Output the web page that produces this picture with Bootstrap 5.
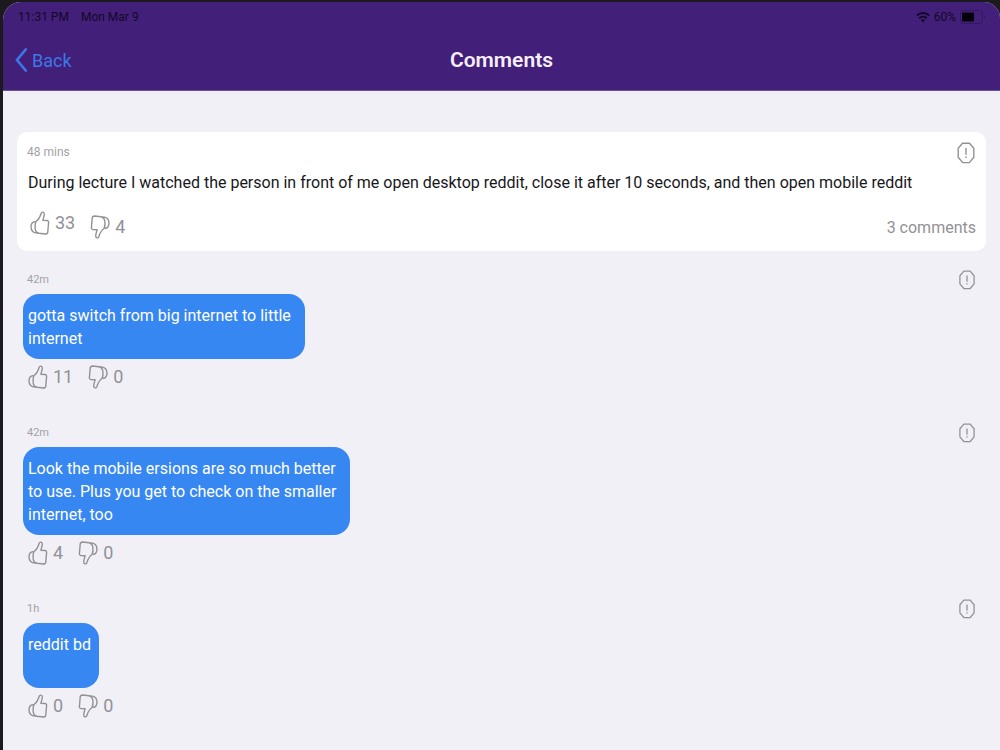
<!DOCTYPE html>
<html lang="en">
<head>
<meta charset="utf-8">
<meta name="viewport" content="width=device-width, initial-scale=1">
<title>Comments</title>
<link href="https://cdn.jsdelivr.net/npm/bootstrap@5.3.0/dist/css/bootstrap.min.css" rel="stylesheet">
<style>
body { font-family: Roboto, "Liberation Sans", sans-serif; background: #1c191f; color: #18171b; font-size: 16px; line-height: 23px; }
.screen { margin: 2px 0 0 3px; min-height: calc(100vh - 2px); background: #f1f0f6; border-radius: 18px 16px 0 0; overflow: hidden; }
.topbar { background: #421f78; height: 89px; border-bottom: 1px solid #6d4f96; }
.status { font-size: 12px; line-height: 16px; padding: 7px 14px 0 15px; color: #160729; }
.titlebar { display: grid; grid-template-columns: 1fr auto 1fr; align-items: center; height: 48px; margin-top: 11px; padding: 0 12px; }
.titlebar h1 { font-size: 21px; line-height: 28px; font-weight: 600; color: #f6eefb; margin: 0; }
.back { color: #3b78e8; font-size: 18px; gap: 4px; }
.content { padding: 41px 14px 0; }
.post { border-radius: 10px; padding: 10px 10px 12px; min-height: 119px; }
.age { font-size: 12px; line-height: 20px; color: #a3a2a7; }
.post-text { padding-left: 1px; margin: 7px 0 0; }
.reply { padding: 19px 10px 0 6px; }
.reply .age { font-size: 11px; padding-left: 4px; }
.bubble { background: #3787f3; color: #fff; border-radius: 16px; min-height: 65px; margin-top: 4px; padding: 10px 14px 9px 5px; }
.solo { padding-right: 8px; }
.plain { background: none; border: 0; padding: 0; color: #929196; }
.vote { display: flex; align-items: center; font-size: 18px; line-height: 24px; gap: 5px; }
.votes { display: flex; margin: 6px 0 0 5px; gap: 15px; }
.post .votes { margin-left: 3px; margin-top: 0; }
.post .down { margin-top: 4px; }
.space { margin-bottom: 15px; }
svg { display: block; flex: none; }
</style>
</head>
<body>
<svg width="0" height="0" class="position-absolute" aria-hidden="true">
  <symbol id="thumb" viewBox="0 0 20 24"><g fill="none" stroke="#929196" stroke-width="1.4" stroke-linejoin="round" stroke-linecap="round"><path d="M6 10.5C9.5 8 10.4 4.8 11.2 2.2C11.8.6 14.4.7 14.3 3.2C14.2 5.5 13.2 7.5 12.9 9.3L17.2 9.5C18.7 9.7 18.8 11.3 18.5 12.5L17.8 20.8C17.6 22.4 16.8 23 15.5 23L9 22.3C6.8 21.8 5.5 20.3 5.1 17.5C4.8 14.6 4.8 12.5 6 10.5Z"/><path d="M5.2 10.7C2.5 10.5 1 12.7 1 16C1.1 19.8 3 22.2 7.8 22"/></g></symbol>
  <symbol id="report" viewBox="0 0 18 22"><g fill="none" stroke="#929196" stroke-width="1.4" stroke-linejoin="round"><path d="M5.5 1.2H12.5L16.8 6.3V15.2L12.3 20.6H5.7L1.2 15.2V6.3Z"/><path d="M9 6V12.8M9 14.5V16"/></g></symbol>
</svg>
<div class="screen">
  <header class="topbar">
    <div class="status d-flex justify-content-between">
      <div class="d-flex"><span>11:31 PM</span><span class="ms-2 ps-1">Mon Mar 9</span></div>
      <div class="d-flex align-items-center">
        <svg width="14" height="12" viewBox="0 0 14 12" fill="none" stroke="#160729" stroke-width="2"><path d="M.8 4.5C4.3 1.1 9.7 1.1 13.2 4.5M3.2 7.3C5.4 5.2 8.6 5.2 10.8 7.3"/><path d="M4.8 9Q7 7.4 9.2 9L7 11.5Z" fill="#160729" stroke="none"/></svg>
        <span class="mx-1">60%</span>
        <svg width="26" height="14" viewBox="0 0 26 14"><rect x=".5" y=".5" width="22" height="13" rx="3" fill="none" stroke="#351760"/><rect x="2" y="2.5" width="12" height="9" rx="1" fill="#05010b"/><path d="M24 5Q26 7 24 9Z" fill="#351760"/></svg>
      </div>
    </div>
    <div class="titlebar">
      <a href="#" class="back d-flex align-items-center text-decoration-none"><svg width="13" height="26" viewBox="0 0 13 26" fill="none" stroke="currentColor" stroke-width="2.6"><path d="M11.5 1.5L2 13L11.5 24.5"/></svg>Back</a>
      <h1>Comments</h1>
    </div>
  </header>
  <main class="content">
    <article class="post bg-white d-flex flex-column">
      <div class="d-flex justify-content-between"><span class="age">48 mins</span><button class="plain" aria-label="Report post"><svg width="20" height="22"><use href="#report"/></svg></button></div>
      <p class="post-text">During lecture I watched the person in front of me open desktop reddit, close it after 10 seconds, and then open mobile reddit</p>
      <div class="d-flex justify-content-between align-items-end mt-auto">
        <div class="votes"><button class="plain vote mb-1" aria-label="Like"><svg width="20" height="24"><use href="#thumb"/></svg>33</button><button class="plain vote down" aria-label="Dislike"><svg width="20" height="24" viewBox="0 0 20 24"><use href="#thumb" transform="rotate(180 10 12)"/></svg>4</button></div>
        <a href="#" class="plain text-decoration-none">3 comments</a>
      </div>
    </article>
    <article class="reply space">
      <div class="d-flex justify-content-between"><span class="age">42m</span><button class="plain" aria-label="Report comment"><svg width="18" height="20"><use href="#report"/></svg></button></div>
      <div class="d-flex"><div class="bubble">gotta switch from big internet to little<br>internet</div></div>
      <div class="votes"><button class="plain vote" aria-label="Like"><svg width="20" height="24"><use href="#thumb"/></svg>11</button><button class="plain vote" aria-label="Dislike"><svg width="20" height="24" viewBox="0 0 20 24"><use href="#thumb" transform="rotate(180 10 12)"/></svg>0</button></div>
    </article>
    <article class="reply space">
      <div class="d-flex justify-content-between"><span class="age">42m</span><button class="plain" aria-label="Report comment"><svg width="18" height="20"><use href="#report"/></svg></button></div>
      <div class="d-flex"><div class="bubble">Look the mobile ersions are so much better<br>to use. Plus you get to check on the smaller<br>internet, too</div></div>
      <div class="votes"><button class="plain vote" aria-label="Like"><svg width="20" height="24"><use href="#thumb"/></svg>4</button><button class="plain vote" aria-label="Dislike"><svg width="20" height="24" viewBox="0 0 20 24"><use href="#thumb" transform="rotate(180 10 12)"/></svg>0</button></div>
    </article>
    <article class="reply">
      <div class="d-flex justify-content-between"><span class="age">1h</span><button class="plain" aria-label="Report comment"><svg width="18" height="20"><use href="#report"/></svg></button></div>
      <div class="d-flex"><div class="bubble solo">reddit bd</div></div>
      <div class="votes"><button class="plain vote" aria-label="Like"><svg width="20" height="24"><use href="#thumb"/></svg>0</button><button class="plain vote" aria-label="Dislike"><svg width="20" height="24" viewBox="0 0 20 24"><use href="#thumb" transform="rotate(180 10 12)"/></svg>0</button></div>
    </article>
  </main>
</div>
<script src="https://cdn.jsdelivr.net/npm/bootstrap@5.3.0/dist/js/bootstrap.bundle.min.js"></script>
</body>
</html>
